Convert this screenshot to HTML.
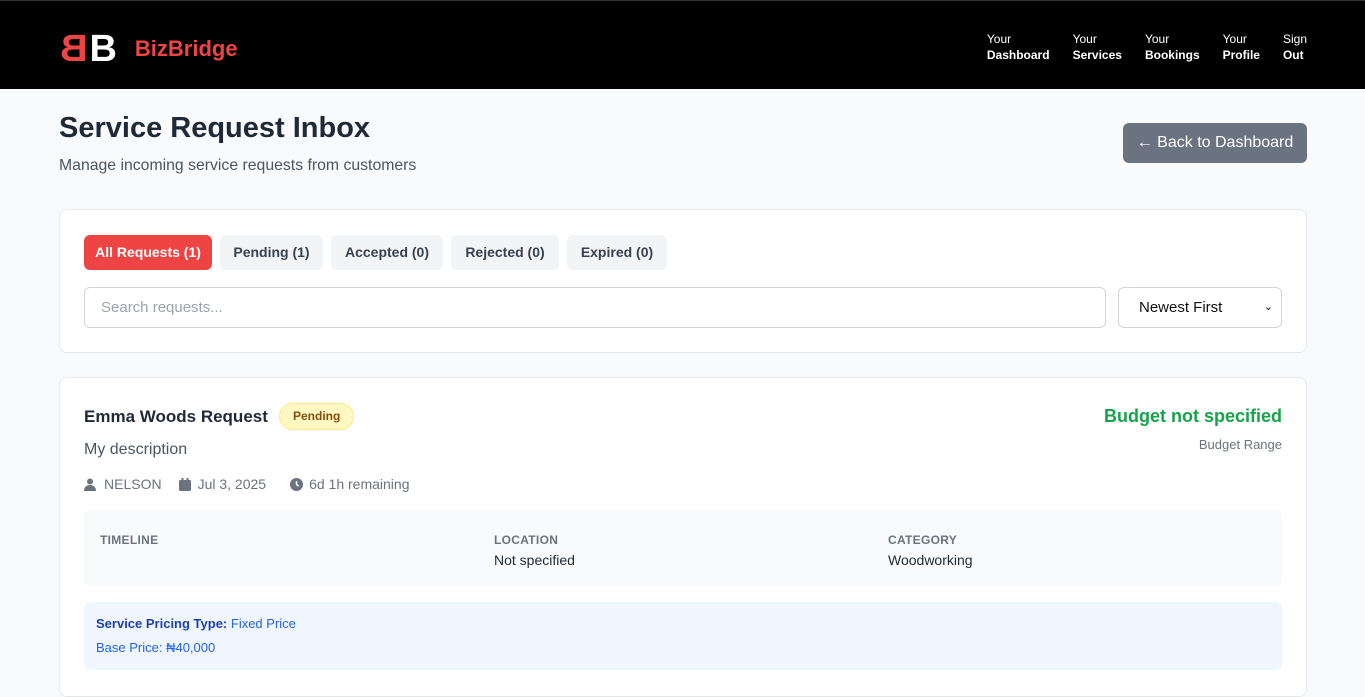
<!DOCTYPE html>
<html><head><meta charset="utf-8"><style>
*{box-sizing:border-box;margin:0;padding:0}
html,body{width:1365px;height:681px;overflow:hidden}
body{background:#f9fafb;font-family:"Liberation Sans",sans-serif;color:#1f2937}
.hdr{height:89px;background:#000;border-top:1px solid #333;position:relative}
.logo{position:absolute;left:60px;top:30px;display:flex;align-items:center}
.bb{font-weight:bold;font-size:38px;line-height:36px}
.nav{position:absolute;top:30px;right:0;display:flex;color:#fff;font-size:12px;line-height:16px}
.nav div{margin-right:23px}
.nav b{display:block}
h1{position:absolute;left:59px;top:112px;font-size:29px;font-weight:bold;color:#1f2937}
.sub{position:absolute;left:59px;top:157px;font-size:15.8px;color:#4b5563}
.back{position:absolute;left:1123px;top:123px;width:184px;height:40px;background:#6b7280;border-radius:6px;color:#fff;font-size:16px;line-height:40px;text-align:center}
.card{position:absolute;left:59px;width:1248px;background:#fff;border:1px solid #e5e7eb;border-radius:8px}
.tab{position:absolute;top:25px;height:35px;line-height:35px;border-radius:6px;background:#f3f4f6;font-size:14px;font-weight:bold;color:#374151;text-align:center}
.inp{position:absolute;top:77px;height:41px;border:1px solid #d1d5db;border-radius:6px;font-size:15px;line-height:39px;padding-left:16px}
.meta{position:absolute;top:98px;left:24px;font-size:14px;color:#6b7280;display:flex;align-items:center}
.lbl{font-size:12px;font-weight:bold;color:#6b7280;letter-spacing:.3px}
</style></head><body>
<div class="hdr">
<div class="logo"><span class="bb" style="color:#ef4444;display:inline-block;transform:scaleX(-1)">B</span><span class="bb" style="color:#fff;margin-left:2px">B</span><span style="color:#ef4444;font-size:22px;font-weight:bold;margin-left:18px">BizBridge</span></div>
<div class="nav"><div>Your<b>Dashboard</b></div><div>Your<b>Services</b></div><div>Your<b>Bookings</b></div><div>Your<b>Profile</b></div><div style="margin-right:58px">Sign<b>Out</b></div></div>
</div>
<h1>Service Request Inbox</h1>
<div class="sub">Manage incoming service requests from customers</div>
<div class="back">← Back to Dashboard</div>
<div class="card" style="top:209px;height:144px">
<div class="tab" style="left:24px;width:128px;background:#ef4444;color:#fff">All Requests (1)</div>
<div class="tab" style="left:160px;width:103px">Pending (1)</div>
<div class="tab" style="left:271px;width:112px">Accepted (0)</div>
<div class="tab" style="left:391px;width:108px">Rejected (0)</div>
<div class="tab" style="left:507px;width:100px">Expired (0)</div>
<div class="inp" style="left:24px;width:1022px;color:#9ca3af">Search requests...</div>
<div class="inp" style="left:1058px;width:164px;color:#111;padding-left:20px">Newest First<span style="position:absolute;right:8px;font-size:11px">⌄</span></div>
</div>
<div class="card" style="top:377px;height:320px">
<div style="position:absolute;left:24px;top:29px;font-size:17px;font-weight:bold">Emma Woods Request</div>
<div style="position:absolute;left:219px;top:25px;height:27px;padding:0 13px;line-height:25px;border:1px solid #fde68a;background:#fef9c3;color:#854d0e;border-radius:14px;font-size:12px;font-weight:bold">Pending</div>
<div style="position:absolute;right:24px;top:28px;font-size:18px;font-weight:bold;color:#16a34a">Budget not specified</div>
<div style="position:absolute;right:24px;top:59px;font-size:13px;color:#6b7280">Budget Range</div>
<div style="position:absolute;left:24px;top:63px;font-size:16px;color:#4b5563">My description</div>
<div class="meta"><svg width="12" height="13" viewBox="0 0 12 13" fill="#6b7280"><circle cx="6" cy="3.5" r="3"/><path d="M0 13c0-4 2.5-6 6-6s6 2 6 6z"/></svg><span style="margin-left:8px">NELSON</span>
<svg style="margin-left:17px" width="12" height="13" viewBox="0 0 12 13" fill="#6b7280"><rect x="0" y="2" width="12" height="11" rx="1.5"/><rect x="2.5" y="0" width="2" height="3"/><rect x="7.5" y="0" width="2" height="3"/></svg><span style="margin-left:7px">Jul 3, 2025</span>
<svg style="margin-left:24px" width="13" height="13" viewBox="0 0 13 13"><circle cx="6.5" cy="6.5" r="6.5" fill="#6b7280"/><path d="M6.5 3v3.5l2.2 1.6" stroke="#fff" stroke-width="1.5" fill="none"/></svg><span style="margin-left:6px">6d 1h remaining</span></div>
<div style="position:absolute;left:24px;top:132px;width:1198px;height:76px;background:#f9fafb;border-radius:6px">
<div class="lbl" style="position:absolute;left:16px;top:23px">TIMELINE</div>
<div class="lbl" style="position:absolute;left:410px;top:23px">LOCATION</div>
<div style="position:absolute;left:410px;top:42px;font-size:14px;color:#1f2937">Not specified</div>
<div class="lbl" style="position:absolute;left:804px;top:23px">CATEGORY</div>
<div style="position:absolute;left:804px;top:42px;font-size:14px;color:#1f2937">Woodworking</div>
</div>
<div style="position:absolute;left:24px;top:224px;width:1198px;height:68px;background:#eff6ff;border-radius:6px;color:#2563eb;font-size:13px">
<div style="position:absolute;left:12px;top:14px"><b style="color:#1e40af">Service Pricing Type:</b> Fixed Price</div>
<div style="position:absolute;left:12px;top:38px">Base Price: ₦40,000</div>
</div>
</div>
</body></html>
